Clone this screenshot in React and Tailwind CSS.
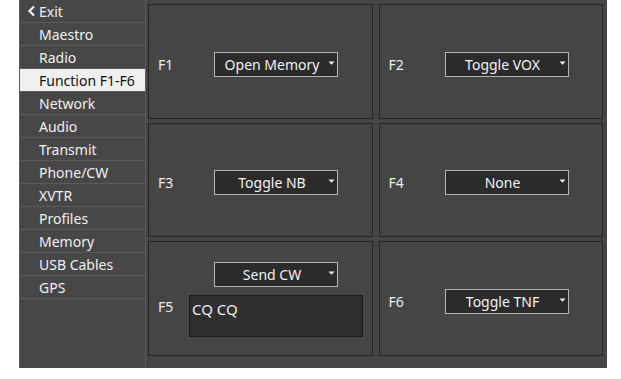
const menu = [
  "Maestro",
  "Radio",
  "Function F1-F6",
  "Network",
  "Audio",
  "Transmit",
  "Phone/CW",
  "XVTR",
  "Profiles",
  "Memory",
  "USB Cables",
  "GPS",
];

function Dropdown({ value }) {
  return (
    <div className="w-[124px] h-[25px] bg-[#2b2b2b] border border-[#b4b4b4] flex items-center">
      <span className="flex-1 text-center text-[14px] text-[#f2f2f2] pl-[2px] whitespace-nowrap">{value}</span>
      <svg width="9" height="6" viewBox="0 0 9 6" className="mr-[1px] mb-[3px]">
        <path d="M1.5 1.5h6L4.5 4.8z" fill="#f2f2f2" />
      </svg>
    </div>
  );
}

function Panel({ label, value }) {
  return (
    <div className="border border-[#262626] flex items-center pt-[6px]">
      <span className="w-[65px] pl-[9px] text-[14px] text-[#ededed]">{label}</span>
      <Dropdown value={value} />
    </div>
  );
}

function App() {
  return (
    <div
      className="w-[621px] h-[379px] bg-white"
      style={{ fontFamily: "'Noto Sans', 'Open Sans', sans-serif" }}
    >
      <div className="ml-[19px] w-[588px] h-[368px] bg-[#454545] flex">
        <div className="w-[127px] h-full bg-[#474747] border-l border-r border-[#5d5d5d]">
          <div className="h-[23px] flex items-center pl-[7px] border-b border-[#5a5a5a] text-[14px] text-[#f0f0f0]">
            <svg width="9" height="12" viewBox="0 0 9 12" className="mr-[3px]">
              <path d="M7 1.5L2.5 6L7 10.5" stroke="#f0f0f0" strokeWidth="2.2" fill="none" />
            </svg>
            Exit
          </div>
          {menu.map((item) => (
            <div
              key={item}
              className={
                item === "Function F1-F6"
                  ? "h-[23px] flex items-center pl-[19px] border-b border-[#5a5a5a] bg-[#f0f0f0] text-[14px] text-[#111] whitespace-nowrap"
                  : "h-[23px] flex items-center pl-[19px] border-b border-[#5a5a5a] text-[14px] text-[#f0f0f0] whitespace-nowrap"
              }
            >
              {item}
            </div>
          ))}
        </div>

        <div className="flex-1 grid grid-cols-2 grid-rows-3 gap-x-[6px] gap-y-[4px] pt-[4px] pl-[2px] pr-[4px] pb-[12px]">
          <Panel label="F1" value="Open Memory" />
          <Panel label="F2" value="Toggle VOX" />
          <Panel label="F3" value="Toggle NB" />
          <Panel label="F4" value="None" />
          <div className="border border-[#262626] flex flex-col pt-[20px]">
            <div className="ml-[65px]">
              <Dropdown value="Send CW" />
            </div>
            <div className="flex mt-[8px]">
              <span className="w-[40px] pl-[9px] pt-[1px] text-[14px] text-[#ededed]">F5</span>
              <div className="w-[174px] h-[42px] bg-[#2f2f2f] border border-[#1c1c1c] px-[2px] text-[15px] text-[#eeeeee] leading-[26px]">
                CQ CQ
              </div>
            </div>
          </div>
          <Panel label="F6" value="Toggle TNF" />
        </div>
      </div>
    </div>
  );
}

export default App;
